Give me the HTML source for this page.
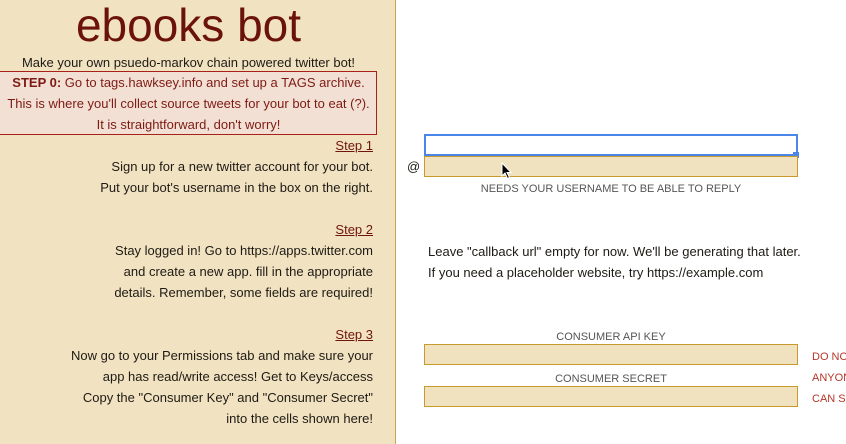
<!DOCTYPE html>
<html><head><meta charset="utf-8"><style>
body{margin:0;width:846px;height:444px;overflow:hidden;background:#fff;font-family:"Liberation Sans",sans-serif;position:relative}
.l{position:absolute;left:0;top:0;width:395px;height:444px;background:#f1e3c2;border-right:1px solid #c9a44a}
.t{position:absolute;white-space:nowrap;font-size:13px;color:#1e1a14;line-height:16px}
.r{right:473px;text-align:right}
.c{left:0;width:377px;text-align:center}
.h{color:#6e1510;text-decoration:underline}
.box{position:absolute;left:424px;width:372px;height:19px;background:#f0e2bf;border:1px solid #c89a2e}
.lab{position:absolute;font-size:11px;color:#555;white-space:nowrap;text-align:center;left:424px;width:374px}
.red{position:absolute;left:812px;font-size:11px;color:#b8352a;white-space:nowrap}
</style></head><body>
<div class="l"></div>
<div class="t c" style="top:2px;font-size:46px;line-height:46px;color:#6b120c">ebooks bot</div>
<div class="t c" style="top:55px">Make your own psuedo-markov chain powered twitter bot!</div>
<div style="position:absolute;left:-1px;top:71px;width:376px;height:62px;background:#f2e0d4;border:1px solid #a8201a"></div>
<div class="t c" style="top:75px;color:#7e1a14"><b>STEP 0:</b> Go to tags.hawksey.info and set up a TAGS archive.</div>
<div class="t c" style="top:96px;color:#7e1a14">This is where you'll collect source tweets for your bot to eat (?).</div>
<div class="t c" style="top:117px;color:#7e1a14">It is straightforward, don't worry!</div>
<div class="t r h" style="top:138px">Step 1</div>
<div class="t r" style="top:159px">Sign up for a new twitter account for your bot.</div>
<div class="t r" style="top:180px">Put your bot's username in the box on the right.</div>
<div class="t r h" style="top:222px">Step 2</div>
<div class="t r" style="top:243px">Stay logged in! Go to https://apps.twitter.com</div>
<div class="t r" style="top:264px">and create a new app. fill in the appropriate</div>
<div class="t r" style="top:285px">details. Remember, some fields are required!</div>
<div class="t r h" style="top:327px">Step 3</div>
<div class="t r" style="top:348px">Now go to your Permissions tab and make sure your</div>
<div class="t r" style="top:369px">app has read/write access! Get to Keys/access</div>
<div class="t r" style="top:390px">Copy the "Consumer Key" and "Consumer Secret"</div>
<div class="t r" style="top:411px">into the cells shown here!</div>

<div style="position:absolute;left:424px;top:134px;width:370px;height:18px;border:2px solid #4a86e8;background:#fff"></div>
<div style="position:absolute;left:793px;top:152px;width:6px;height:6px;background:#4a86e8"></div>
<div class="box" style="top:156px;height:19px"></div>
<div class="t" style="left:407px;top:159px">@</div>
<div class="lab" style="top:183px">NEEDS YOUR USERNAME TO BE ABLE TO REPLY</div>
<div class="t" style="left:428px;top:244px">Leave "callback url" empty for now. We'll be generating that later.</div>
<div class="t" style="left:428px;top:265px">If you need a placeholder website, try https://example.com</div>
<div class="lab" style="top:331px">CONSUMER API KEY</div>
<div class="box" style="top:344px"></div>
<div class="lab" style="top:373px">CONSUMER SECRET</div>
<div class="box" style="top:386px"></div>
<div class="red" style="top:351px">DO NOT</div>
<div class="red" style="top:372px">ANYONE</div>
<div class="red" style="top:393px">CAN SEE</div>
<svg style="position:absolute;left:501px;top:162px" width="12" height="18" viewBox="0 0 12 18"><path d="M1 1 L1 14 L4 11 L6.5 16.5 L8.5 15.5 L6 10.5 L10 10.5 Z" fill="#000" stroke="#fff" stroke-width="1"/></svg>
</body></html>
